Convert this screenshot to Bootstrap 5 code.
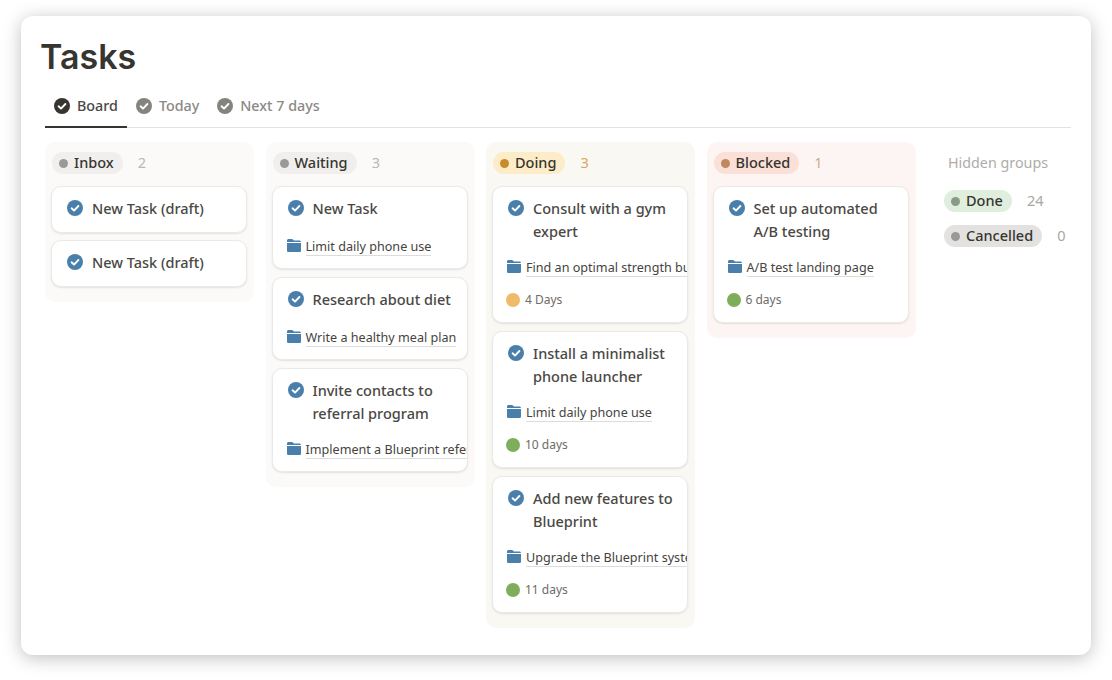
<!DOCTYPE html>
<html lang="en">
<head>
<meta charset="utf-8">
<title>Tasks</title>
<link href="https://cdn.jsdelivr.net/npm/bootstrap@5.3.0/dist/css/bootstrap.min.css" rel="stylesheet">
<style>
html,body{height:100%;overflow:hidden;background:#fff}
body{font-family:"Noto Sans","Open Sans",sans-serif;color:#37352f;padding:16px 21px 25px}
.sheet{height:639px;background:#fff;border-radius:12px;box-shadow:0 3px 18px rgba(0,0,0,.25);padding:0 20px 0 20px}
.page-title{font-family:Inter,"Noto Sans",sans-serif;font-weight:600;font-size:34px;line-height:41px;margin:0 0 0 -1px;padding-top:20px;color:#37352f}
.tabs{margin:12px 0 0 4px;border-bottom:1px solid #e3e2e0;height:39px}
.tabs .nav-link{display:flex;align-items:center;gap:7px;padding:0 9px 4px;height:39px;font-size:14.3px;font-weight:500;color:#8a8984;margin-bottom:-1px;border-bottom:2px solid transparent;border-radius:0}
.tabs .nav-link.active{color:#4a4843;border-bottom-color:#37352f;background:none}
.tabs .nav-link svg{width:16px;height:16px;flex:none}
.board{margin:14px 0 0 4px;gap:11.5px}
.lane{width:209px;flex:none;border-radius:10px;padding:10px 7px 15px 6px;background:#fbfaf8}
.lane-doing{background:#faf8f3}
.lane-blocked{background:#fdf5f3}
.lane-head{height:22px;margin:0 0 12px 1px;gap:15px;font-size:14.5px;color:#b9b8b4}
.pill{display:inline-flex;align-items:center;gap:6px;height:22px;padding:0 9px 0 7px;border-radius:11px;font-size:14.5px;font-weight:500;color:#37352f;background:#f0efed;white-space:nowrap}
.pill i{display:block;width:9px;height:9px;border-radius:50%;background:#999}
.pill-doing{background:#fcecc8}.pill-doing i{background:#c98a2e}
.pill-blocked{background:#fbe0d8}.pill-blocked i{background:#c08860}
.pill-done{background:#dfeedd}.pill-done i{background:#8a9a88}
.pill-cancel{background:#e3e2e0}
.count-doing{color:#d9a565}.count-blocked{color:#cfa98c}
.stack{gap:8px}
.stack-tight{gap:7px}
.task{background:#fff;border:1px solid #ebeae7;border-radius:10px;box-shadow:0 1px 2px rgba(0,0,0,.1);overflow:hidden;padding:10px 0 11px 15px;white-space:nowrap}
.task-one{padding-bottom:10px}
.task-dated{padding-bottom:12px}
.task-title{display:flex;gap:9px;min-height:25px;font-size:14.5px;font-weight:500;line-height:23px;color:#4a4843;white-space:normal;padding-right:12px}
.task-title svg{width:16px;height:16px;flex:none;margin-top:3px}
.task-folder{display:flex;align-items:center;gap:5px;margin-top:15px;height:20px;margin-left:-1px}
.task-folder svg{width:14px;height:13px;flex:none;margin-top:-4px}
.task-folder span{font-size:12.6px;line-height:16px;color:#45433e;border-bottom:1px solid #dddcd9}
.task-when{display:flex;align-items:center;gap:5px;margin-top:12px;height:20px;font-size:12px;color:#6d6c68;margin-left:-2px}
.task-when i{display:block;width:14px;height:14px;border-radius:50%;background:#7fae5a;flex:none}
.task-when i.warn{background:#eebb6a}
.hidden-side{flex:none;padding:10px 0 0 17px;width:150px}
.hidden-title{font-size:14.3px;line-height:22px;color:#aeada9;padding-left:4px;margin-bottom:16px}
.hidden-row{height:22px;margin-bottom:13px;gap:15px;font-size:14.5px;color:#a9a8a4}
</style>
</head>
<body>
<svg width="0" height="0" class="position-absolute">
  <defs>
    <symbol id="tick" viewBox="0 0 16 16"><circle cx="8" cy="8" r="8" fill="currentColor"/><path d="M4.6 8.3l2.4 2.3 4.4-4.6" fill="none" stroke="#fff" stroke-width="1.9" stroke-linecap="round" stroke-linejoin="round"/></symbol>
    <symbol id="dir" viewBox="0 0 14 13"><path d="M0 1.6C0 .7.7 0 1.6 0h3.2c.5 0 .9.2 1.2.6l.8 1h5.6c.9 0 1.6.7 1.6 1.6V3H0z" fill="#4a7fab"/><path d="M0 4h14v7.4c0 .9-.7 1.6-1.6 1.6H1.6C.7 13 0 12.3 0 11.4z" fill="#4a7fab"/></symbol>
  </defs>
</svg>
<main class="sheet d-flex flex-column">
  <h1 class="page-title">Tasks</h1>
  <ul class="nav tabs">
    <li class="nav-item"><a class="nav-link active" href="#"><svg style="color:#37352f"><use href="#tick"/></svg>Board</a></li>
    <li class="nav-item"><a class="nav-link" href="#"><svg style="color:#84837e"><use href="#tick"/></svg>Today</a></li>
    <li class="nav-item"><a class="nav-link" href="#"><svg style="color:#84837e"><use href="#tick"/></svg>Next 7 days</a></li>
  </ul>
  <div class="board d-flex align-items-start">
    <section class="lane">
      <div class="lane-head d-flex align-items-center"><span class="pill"><i></i>Inbox</span><span>2</span></div>
      <div class="d-flex flex-column stack-tight">
        <article class="task task-one"><div class="task-title"><svg style="color:#4a7fab"><use href="#tick"/></svg>New Task (draft)</div></article>
        <article class="task task-one"><div class="task-title"><svg style="color:#4a7fab"><use href="#tick"/></svg>New Task (draft)</div></article>
      </div>
    </section>
    <section class="lane">
      <div class="lane-head d-flex align-items-center"><span class="pill"><i></i>Waiting</span><span>3</span></div>
      <div class="d-flex flex-column stack">
        <article class="task"><div class="task-title"><svg style="color:#4a7fab"><use href="#tick"/></svg>New Task</div><div class="task-folder"><svg><use href="#dir"/></svg><span>Limit daily phone use</span></div></article>
        <article class="task"><div class="task-title"><svg style="color:#4a7fab"><use href="#tick"/></svg>Research about diet</div><div class="task-folder"><svg><use href="#dir"/></svg><span>Write a healthy meal plan</span></div></article>
        <article class="task"><div class="task-title"><svg style="color:#4a7fab"><use href="#tick"/></svg><span>Invite contacts to referral program</span></div><div class="task-folder"><svg><use href="#dir"/></svg><span>Implement a Blueprint referral program</span></div></article>
      </div>
    </section>
    <section class="lane lane-doing">
      <div class="lane-head d-flex align-items-center"><span class="pill pill-doing"><i></i>Doing</span><span class="count-doing">3</span></div>
      <div class="d-flex flex-column stack">
        <article class="task task-dated"><div class="task-title"><svg style="color:#4a7fab"><use href="#tick"/></svg><span>Consult with a gym expert</span></div><div class="task-folder"><svg><use href="#dir"/></svg><span>Find an optimal strength building plan</span></div><div class="task-when"><i class="warn"></i>4 Days</div></article>
        <article class="task task-dated"><div class="task-title"><svg style="color:#4a7fab"><use href="#tick"/></svg><span>Install a minimalist phone launcher</span></div><div class="task-folder"><svg><use href="#dir"/></svg><span>Limit daily phone use</span></div><div class="task-when"><i></i>10 days</div></article>
        <article class="task task-dated"><div class="task-title"><svg style="color:#4a7fab"><use href="#tick"/></svg><span>Add new features to Blueprint</span></div><div class="task-folder"><svg><use href="#dir"/></svg><span>Upgrade the Blueprint system features</span></div><div class="task-when"><i></i>11 days</div></article>
      </div>
    </section>
    <section class="lane lane-blocked">
      <div class="lane-head d-flex align-items-center"><span class="pill pill-blocked"><i></i>Blocked</span><span class="count-blocked">1</span></div>
      <div class="d-flex flex-column stack">
        <article class="task task-dated"><div class="task-title"><svg style="color:#4a7fab"><use href="#tick"/></svg><span>Set up automated A/B testing</span></div><div class="task-folder"><svg><use href="#dir"/></svg><span>A/B test landing page</span></div><div class="task-when"><i></i>6 days</div></article>
      </div>
    </section>
    <aside class="hidden-side">
      <div class="hidden-title">Hidden groups</div>
      <div class="hidden-row d-flex align-items-center"><span class="pill pill-done"><i></i>Done</span><span>24</span></div>
      <div class="hidden-row d-flex align-items-center"><span class="pill pill-cancel"><i></i>Cancelled</span><span>0</span></div>
    </aside>
  </div>
</main>
<script src="https://cdn.jsdelivr.net/npm/bootstrap@5.3.0/dist/js/bootstrap.bundle.min.js"></script>
</body>
</html>
